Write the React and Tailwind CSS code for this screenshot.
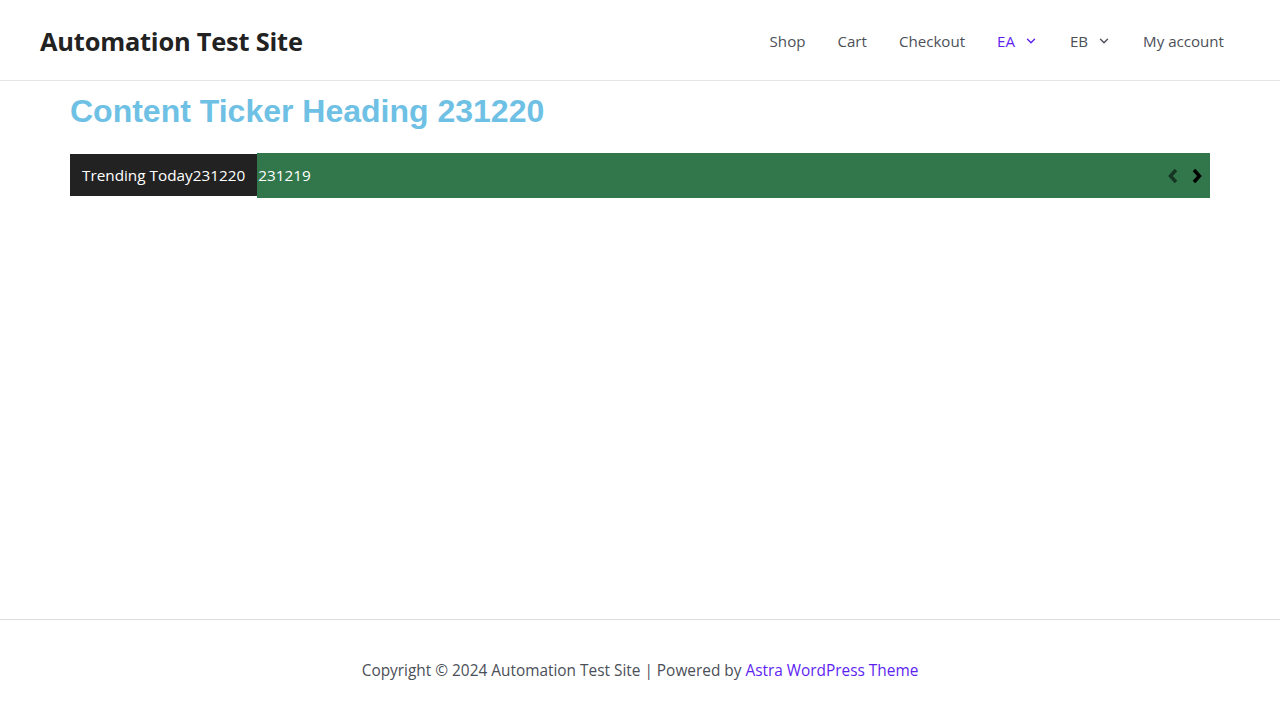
import { ChevronDown } from 'lucide-react';

const font = { fontFamily: '"Open Sans", "Noto Sans", sans-serif' };

function NavItem({ label, active, dropdown }) {
  return (
    <a
      href="#"
      className={`flex items-center px-4 pt-[2px] text-[15.1px] ${active ? 'text-[#5e1ff1]' : 'text-[#4b4f58]'}`}
    >
      {label}
      {dropdown && <ChevronDown className="ml-[9px] w-[14px] h-[14px]" strokeWidth={2.4} />}
    </a>
  );
}

function Chevron({ dir, className }) {
  return (
    <svg viewBox="0 0 12 16" className={className} fill="none" stroke="currentColor" strokeWidth={3.4}>
      {dir === 'left' ? <path d="M9 2 3.5 8 9 14" /> : <path d="M3 2 8.5 8 3 14" />}
    </svg>
  );
}

export default function App() {
  return (
    <div className="min-h-screen flex flex-col bg-white" style={font}>
      {/* Header */}
      <header className="h-[81px] border-b border-[#e5e5e5] flex items-center justify-between px-10">
        <a href="#" className="pt-[2px] text-[25.4px] font-bold text-[#222222] tracking-[-0.2px]">
          Automation Test Site
        </a>
        <nav className="flex items-center h-full">
          <NavItem label="Shop" />
          <NavItem label="Cart" />
          <NavItem label="Checkout" />
          <NavItem label="EA" active dropdown />
          <NavItem label="EB" dropdown />
          <NavItem label="My account" />
        </nav>
      </header>

      {/* Content */}
      <main className="flex-1">
        <div className="w-[1140px] mx-auto pt-[11px]">
          <h1
            className="text-[32px] font-bold leading-[1.2] text-[#6ec1e4]"
            style={{ fontFamily: '"Liberation Sans", Arial, sans-serif' }}
          >
            Content Ticker Heading 231220
          </h1>
          <div className="mt-[23px] flex items-start">
            <div className="mt-px h-[42px] bg-[#222222] text-white text-[15.3px] flex items-center px-3 whitespace-nowrap">
              Trending Today231220
            </div>
            <div className="flex-1 h-[45px] bg-[#32764c] flex items-center justify-between pl-px pr-[7px]">
              <span className="text-white text-[15.3px]">231219</span>
              <div className="flex items-center gap-[12px]">
                <Chevron dir="left" className="w-[12px] h-[16px] text-black/55" />
                <Chevron dir="right" className="w-[12px] h-[16px] text-black" />
              </div>
            </div>
          </div>
        </div>
      </main>

      {/* Footer */}
      <footer className="h-[101px] border-t border-[#dddddd] flex items-center justify-center pt-[2px] text-[15.4px] text-[#4b4f58]">
        <p>
          Copyright © 2024 Automation Test Site | Powered by{' '}
          <a href="#" className="text-[#5e1ff1]">Astra WordPress Theme</a>
        </p>
      </footer>
    </div>
  );
}
